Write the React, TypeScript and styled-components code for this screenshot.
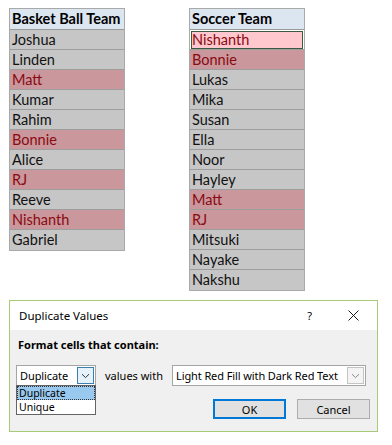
import styled, { createGlobalStyle } from 'styled-components'

const GlobalStyle = createGlobalStyle`
  html, body {
    margin: 0;
    padding: 0;
    background: #ffffff;
  }
`

type Cell = { name: string; dup?: boolean; active?: boolean }

const basketBall: Cell[] = [
  { name: 'Joshua' },
  { name: 'Linden' },
  { name: 'Matt', dup: true },
  { name: 'Kumar' },
  { name: 'Rahim' },
  { name: 'Bonnie', dup: true },
  { name: 'Alice' },
  { name: 'RJ', dup: true },
  { name: 'Reeve' },
  { name: 'Nishanth', dup: true },
  { name: 'Gabriel' },
]

const soccer: Cell[] = [
  { name: 'Nishanth', dup: true, active: true },
  { name: 'Bonnie', dup: true },
  { name: 'Lukas' },
  { name: 'Mika' },
  { name: 'Susan' },
  { name: 'Ella' },
  { name: 'Noor' },
  { name: 'Hayley' },
  { name: 'Matt', dup: true },
  { name: 'RJ', dup: true },
  { name: 'Mitsuki' },
  { name: 'Nayake' },
  { name: 'Nakshu' },
]

const Chevron = ({ color }: { color: string }) => (
  <svg width="9" height="6" viewBox="0 0 9 6">
    <path d="M1 1.2 L4.5 4.6 L8 1.2" fill="none" stroke={color} strokeWidth="1" />
  </svg>
)

const TeamTable = ({ title, cells }: { title: string; cells: Cell[] }) => (
  <Table>
    <HeaderCell>{title}</HeaderCell>
    {cells.map((c, i) => (
      <Row key={i} $dup={c.dup} $active={c.active}>
        {c.name}
      </Row>
    ))}
  </Table>
)

export default function App() {
  return (
    <Page>
      <GlobalStyle />
      <Sheet>
        <TeamTable title="Basket Ball Team" cells={basketBall} />
        <TeamTable title="Soccer Team" cells={soccer} />
      </Sheet>

      <Dialog>
        <TitleBar>
          <Title>Duplicate Values</Title>
          <TitleControls>
            <Help>?</Help>
            <svg width="11" height="11" viewBox="0 0 11 11">
              <path d="M0.5 0.5 L10.5 10.5 M10.5 0.5 L0.5 10.5" stroke="#1a1a1a" strokeWidth="1" />
            </svg>
          </TitleControls>
        </TitleBar>
        <Body>
          <Label>Format cells that contain:</Label>
          <OptionRow>
            <ComboWrap>
              <Combo $width={80}>
                <ComboText>Duplicate</ComboText>
                <ArrowBox $open>
                  <Chevron color="#333" />
                </ArrowBox>
              </Combo>
              <ListPopup>
                <ListItem $selected>Duplicate</ListItem>
                <ListItem>Unique</ListItem>
              </ListPopup>
            </ComboWrap>
            <Text>values with</Text>
            <Combo $width={194}>
              <ComboText>Light Red Fill with Dark Red Text</ComboText>
              <ArrowBox>
                <Chevron color="#888" />
              </ArrowBox>
            </Combo>
          </OptionRow>
          <Buttons>
            <Button $primary>OK</Button>
            <Button>Cancel</Button>
          </Buttons>
        </Body>
      </Dialog>
    </Page>
  )
}

const Page = styled.div`
  padding: 8px 0 0 9px;
  width: 392px;
  height: 445px;
  box-sizing: border-box;
`

const Sheet = styled.div`
  display: flex;
  align-items: flex-start;
  gap: 64px;
`

const Table = styled.div`
  display: flex;
  flex-direction: column;
  width: 116px;
  border: 1px solid #a9a9a9;
  box-sizing: border-box;
  font-family: Lato, 'Open Sans', sans-serif;
  font-size: 14.5px;
`

const HeaderCell = styled.div`
  height: 20px;
  line-height: 20px;
  padding-left: 2px;
  background: #dce6f1;
  font-weight: bold;
  color: #000;
  border-bottom: 1px solid #9a9a9a;
  white-space: nowrap;
`

const Row = styled.div<{ $dup?: boolean; $active?: boolean }>`
  height: 20px;
  line-height: 19px;
  padding-left: 2px;
  box-sizing: border-box;
  background: ${(p) => (p.$active ? '#ffc7ce' : p.$dup ? '#c9979c' : '#c6c6c6')};
  color: ${(p) => (p.$dup ? '#8a0a10' : '#111')};
  border-bottom: 1px solid #9e9e9e;
  ${(p) => (p.$active ? 'outline: 1px solid #3a5a3f; outline-offset: -2px; box-shadow: inset 0 0 0 1px #fff;' : '')}
  &:last-child {
    border-bottom: none;
  }
`

const Dialog = styled.div`
  margin-top: 9px;
  width: 369px;
  height: 132px;
  box-sizing: border-box;
  border: 1px solid #a9c97a;
  display: flex;
  flex-direction: column;
  font-family: 'Noto Sans', 'Open Sans', sans-serif;
  font-size: 11px;
  color: #000;
`

const TitleBar = styled.div`
  height: 29px;
  background: #fff;
  display: flex;
  align-items: center;
  justify-content: space-between;
  padding: 0 18px 0 9px;
  flex-shrink: 0;
`

const Title = styled.div`
  font-size: 11.5px;
`

const TitleControls = styled.div`
  display: flex;
  align-items: center;
  gap: 36px;
`

const Help = styled.span`
  font-size: 11px;
`

const Body = styled.div`
  flex: 1;
  background: #f0f0f0;
  padding: 7px 7px 0 6px;
  display: flex;
  flex-direction: column;
`

const Label = styled.div`
  font-weight: bold;
  margin-left: 2px;
  height: 16px;
  line-height: 16px;
`

const OptionRow = styled.div`
  display: flex;
  align-items: center;
  margin-top: 12px;
`

const ComboWrap = styled.div`
  position: relative;
`

const Combo = styled.div<{ $width: number }>`
  width: ${(p) => p.$width}px;
  height: 21px;
  box-sizing: border-box;
  border: 1px solid #a5a5a5;
  background: #fff;
  display: flex;
  align-items: center;
  justify-content: space-between;
  padding: 0 1px 0 3px;
`

const ComboText = styled.span`
  white-space: nowrap;
  letter-spacing: -0.1px;
`

const ArrowBox = styled.div<{ $open?: boolean }>`
  width: 17px;
  height: 17px;
  box-sizing: border-box;
  border: 1px solid ${(p) => (p.$open ? '#3c7fb1' : '#c4c4c4')};
  background: ${(p) => (p.$open ? '#e5f1fb' : '#f4f4f4')};
  display: flex;
  align-items: center;
  justify-content: center;
  flex-shrink: 0;
`

const ListPopup = styled.div`
  position: absolute;
  top: 20px;
  left: 0;
  width: 80px;
  box-sizing: border-box;
  border: 1px solid #646464;
  background: #fff;
  padding: 0;
  z-index: 2;
`

const ListItem = styled.div<{ $selected?: boolean }>`
  height: 14px;
  line-height: 14px;
  padding-left: 2px;
  box-sizing: border-box;
  overflow: hidden;
  font-size: 10.5px;
  background: ${(p) => (p.$selected ? '#99c9ef' : 'transparent')};
  outline: ${(p) => (p.$selected ? '1px dotted #333' : 'none')};
  outline-offset: -1px;
`

const Text = styled.span`
  margin: 0 9px;
`

const Buttons = styled.div`
  display: flex;
  justify-content: flex-end;
  gap: 11px;
  margin-top: 13px;
`

const Button = styled.div<{ $primary?: boolean }>`
  width: 73px;
  height: 20px;
  box-sizing: border-box;
  display: flex;
  align-items: center;
  justify-content: center;
  background: #e1e1e1;
  border: ${(p) => (p.$primary ? '2px solid #0078d7' : '1px solid #adadad')};
`
